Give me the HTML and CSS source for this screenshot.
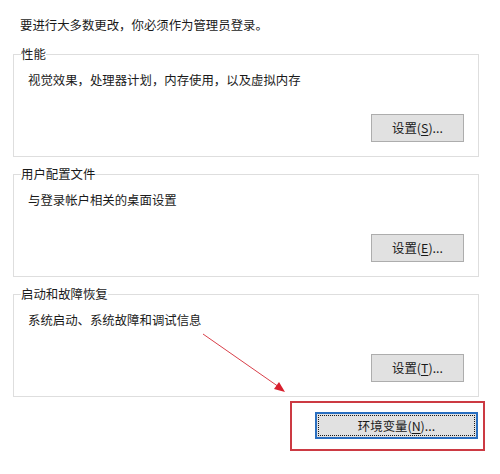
FILE: index.html
```html
<!DOCTYPE html>
<html lang="zh-CN">
  <head>
    <meta charset="UTF-8" />
    <title>系统属性 - 高级</title>
    <link rel="stylesheet" href="styles.css">
  </head>

  <body>
    <div class="page">
      <p class="intro">要进行大多数更改，你必须作为管理员登录。</p>

      <fieldset class="group">
        <legend>性能</legend>
        <p class="desc">视觉效果，处理器计划，内存使用，以及虚拟内存</p>
        <div class="actions">
          <button class="btn">设置(<u>S</u>)...</button>
        </div>
      </fieldset>

      <fieldset class="group">
        <legend>用户配置文件</legend>
        <p class="desc">与登录帐户相关的桌面设置</p>
        <div class="actions">
          <button class="btn">设置(<u>E</u>)...</button>
        </div>
      </fieldset>

      <fieldset class="group">
        <legend>启动和故障恢复</legend>
        <p class="desc">系统启动、系统故障和调试信息</p>
        <div class="actions">
          <button class="btn">设置(<u>T</u>)...</button>
        </div>
      </fieldset>

      <div class="footer">
        <div class="highlight">
          <button class="btn btn-focus">环境变量(<u>N</u>)...</button>
        </div>
      </div>

      <!-- 标注箭头 -->
      <svg class="arrow" width="500" height="474" viewBox="0 0 500 474">
        <line x1="203" y1="334" x2="279" y2="387" stroke="#d9404a" stroke-width="1" />
        <polygon points="285,392 274,389 279,382" fill="#d8202e" />
      </svg>
    </div>
  </body>
</html>
```

FILE: styles.css
```css
body {
  margin: 0;
  background-color: #ffffff;
  font-family: "Noto Sans CJK SC", "Noto Sans", sans-serif;
  font-size: 12.4px;
  color: #1a1a1a;
}

.page {
  position: relative;
  width: 500px;
  height: 474px;
  padding: 17px 21px 0 13px;
  box-sizing: border-box;
}

.intro {
  margin: 0 0 13px 7px;
  line-height: 16px;
}

.group {
  margin: 0 0 9px 0;
  padding: 0 14px 14px 7px;
  border: 1px solid #dedede;
  min-width: 0;
}

.group legend {
  padding: 0;
  line-height: 16px;
}

.desc {
  margin: 10px 0 0 7px;
  line-height: 16px;
}

.actions {
  display: flex;
  justify-content: flex-end;
  margin-top: 26px;
}

.btn {
  width: 93px;
  height: 28px;
  padding: 0;
  background-color: #e1e1e1;
  border: 1px solid #adadad;
  font-family: inherit;
  font-size: 12.4px;
  color: #1a1a1a;
}

.btn u {
  text-decoration-thickness: 1px;
  text-underline-offset: 2px;
}

.footer {
  display: flex;
  justify-content: flex-end;
  margin-top: -5px;
  margin-right: -6px;
}

.highlight {
  padding: 9px 5px 10px 23px;
  border: 2px solid #cc3a43;
}

.btn-focus {
  width: 163px;
  height: 27px;
  border: 2px solid #2a6fc0;
  outline: 1px dotted #1a1a1a;
  outline-offset: -4px;
}

.arrow {
  position: absolute;
  left: 0;
  top: 0;
  pointer-events: none;
}
```
